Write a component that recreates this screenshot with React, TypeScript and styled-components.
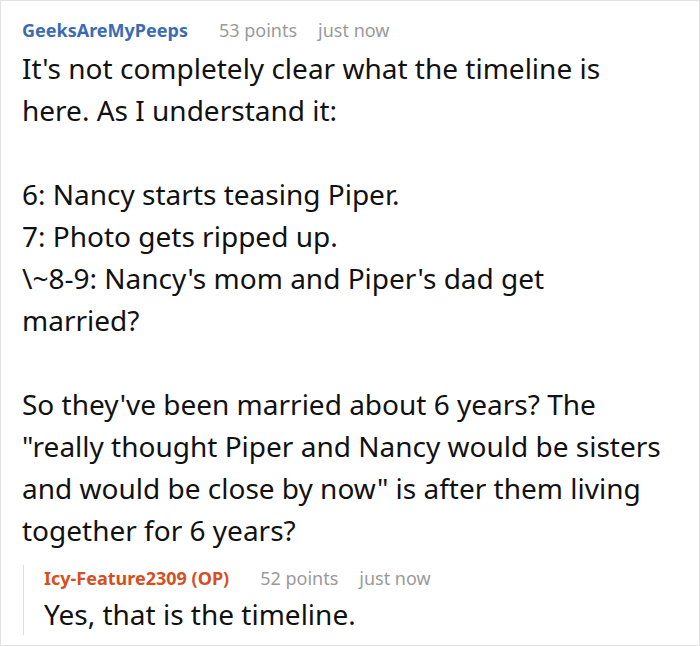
import styled, { createGlobalStyle } from 'styled-components';

const GlobalStyle = createGlobalStyle`
  html, body {
    margin: 0;
    padding: 0;
    background: #fff;
  }
  body {
    font-family: "Noto Sans", "Open Sans", sans-serif;
    color: #111;
  }
`;

const Frame = styled.div`
  box-sizing: border-box;
  width: 700px;
  height: 646px;
  border: 1px solid #e2e2e2;
  padding: 16px 20px 0 21px;
  overflow: hidden;
`;

const Header = styled.div`
  display: flex;
  align-items: baseline;
  font-size: 18px;
  line-height: 26px;
`;

const Author = styled.span<{ $op?: boolean }>`
  font-weight: 700;
  color: ${(p) => (p.$op ? '#d4501f' : '#3a6cb4')};
  margin-right: 31px;
`;

const Meta = styled.span`
  color: #9a9a9a;
  margin-right: 21px;
`;

const Body = styled.div`
  font-size: 28px;
  line-height: 42px;
  margin-top: 4px;
  white-space: pre-line;
`;

const Reply = styled.div`
  margin-top: 14px;
  margin-left: 1px;
  padding-left: 20px;
  border-left: 1px solid #dedede;
`;

const ReplyBody = styled(Body)`
  margin-top: 2px;
`;

type CommentHeadProps = {
  author: string,
  points: number,
  op?: boolean,
}

const CommentHead = ({ author, points, op }: CommentHeadProps) => (
  <Header>
    <Author $op={op}>{author}</Author>
    <Meta>{points} points</Meta>
    <Meta>just now</Meta>
  </Header>
);

// line breaks follow the original layout
const mainText = `It's not completely clear what the timeline is
here. As I understand it:

6: Nancy starts teasing Piper.
7: Photo gets ripped up.
\\~8-9: Nancy's mom and Piper's dad get
married?

So they've been married about 6 years? The
"really thought Piper and Nancy would be sisters
and would be close by now" is after them living
together for 6 years?`;

const App = () => (
  <>
    <GlobalStyle />
    <Frame>
      <CommentHead author="GeeksAreMyPeeps" points={53} />
      <Body>{mainText}</Body>
      <Reply>
        <CommentHead author="Icy-Feature2309 (OP)" points={52} op />
        <ReplyBody>Yes, that is the timeline.</ReplyBody>
      </Reply>
    </Frame>
  </>
);

export default App;
